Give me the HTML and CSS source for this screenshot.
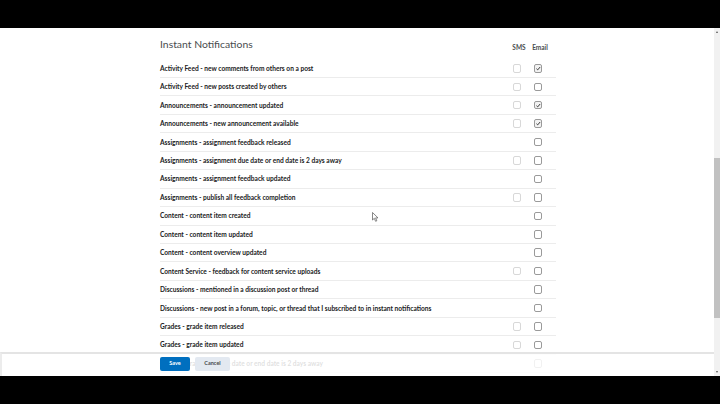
FILE: index.html
```html
<!DOCTYPE html>
<html lang="en">
<head>
<meta charset="utf-8">
<title>Instant Notifications</title>
<link rel="stylesheet" href="styles.css">
</head>
<body>
<div class="screen">
  <div class="bar"></div>
  <div class="view">
    <div class="pane">
      <div class="content">
        <div class="head">
          <h1 class="title">Instant Notifications</h1>
          <div class="colhead">SMS</div>
          <div class="colhead">Email</div>
        </div>
        <div class="row"><span class="label">Activity Feed - new comments from others on a post</span><span class="cell"><span class="cb sms"></span></span><span class="cell"><span class="cb email on"><svg viewBox="0 0 8 8"><path d="M1.8 4.3 L3.3 5.7 L6.3 2.2"/></svg></span></span></div>
        <div class="row"><span class="label">Activity Feed - new posts created by others</span><span class="cell"><span class="cb sms"></span></span><span class="cell"><span class="cb email"></span></span></div>
        <div class="row"><span class="label">Announcements - announcement updated</span><span class="cell"><span class="cb sms"></span></span><span class="cell"><span class="cb email on"><svg viewBox="0 0 8 8"><path d="M1.8 4.3 L3.3 5.7 L6.3 2.2"/></svg></span></span></div>
        <div class="row"><span class="label">Announcements - new announcement available</span><span class="cell"><span class="cb sms"></span></span><span class="cell"><span class="cb email on"><svg viewBox="0 0 8 8"><path d="M1.8 4.3 L3.3 5.7 L6.3 2.2"/></svg></span></span></div>
        <div class="row"><span class="label">Assignments - assignment feedback released</span><span class="cell"></span><span class="cell"><span class="cb email"></span></span></div>
        <div class="row"><span class="label">Assignments - assignment due date or end date is 2 days away</span><span class="cell"><span class="cb sms"></span></span><span class="cell"><span class="cb email"></span></span></div>
        <div class="row"><span class="label">Assignments - assignment feedback updated</span><span class="cell"></span><span class="cell"><span class="cb email"></span></span></div>
        <div class="row"><span class="label">Assignments - publish all feedback completion</span><span class="cell"><span class="cb sms"></span></span><span class="cell"><span class="cb email"></span></span></div>
        <div class="row"><span class="label">Content - content item created</span><span class="cell"></span><span class="cell"><span class="cb email"></span></span></div>
        <div class="row"><span class="label">Content - content item updated</span><span class="cell"></span><span class="cell"><span class="cb email"></span></span></div>
        <div class="row"><span class="label">Content - content overview updated</span><span class="cell"></span><span class="cell"><span class="cb email"></span></span></div>
        <div class="row"><span class="label">Content Service - feedback for content service uploads</span><span class="cell"><span class="cb sms"></span></span><span class="cell"><span class="cb email"></span></span></div>
        <div class="row"><span class="label">Discussions - mentioned in a discussion post or thread</span><span class="cell"></span><span class="cell"><span class="cb email"></span></span></div>
        <div class="row"><span class="label">Discussions - new post in a forum, topic, or thread that I subscribed to in instant notifications</span><span class="cell"></span><span class="cell"><span class="cb email"></span></span></div>
        <div class="row"><span class="label">Grades - grade item released</span><span class="cell"><span class="cb sms"></span></span><span class="cell"><span class="cb email"></span></span></div>
        <div class="row"><span class="label">Grades - grade item updated</span><span class="cell"><span class="cb sms"></span></span><span class="cell"><span class="cb email"></span></span></div>
        <div class="row"><span class="label">Grades - grade item due date or end date is 2 days away</span><span class="cell"></span><span class="cell"><span class="cb email"></span></span></div>
      </div>
      <div class="footer">
        <button class="btn primary">Save</button>
        <button class="btn secondary">Cancel</button>
      </div>
      <svg class="cursor" viewBox="0 0 7 10"><path d="M0.5 0.5 L0.5 8 L2.3 6.3 L3.6 9.3 L4.8 8.8 L3.6 5.9 L6 5.9 Z"/></svg>
    </div>
    <div class="scroll">
      <div class="arr up"></div>
      <div class="thumb"></div>
      <div class="track-fill"></div>
      <div class="arr down"></div>
    </div>
  </div>
  <div class="bar"></div>
</div>
</body>
</html>
```

FILE: styles.css
```css
* { box-sizing: border-box; }
html, body { margin: 0; padding: 0; background: #000; }
body { font-family: Lato, "Open Sans", "Liberation Sans", sans-serif; }

.screen { width: 720px; height: 404px; display: flex; flex-direction: column; }
.bar { height: 28px; background: #000; flex: none; }
.view { height: 348px; display: flex; background: #fff; flex: none; }
.pane { flex: 1; position: relative; overflow: hidden; background: #fff; }

.content { margin-left: 160px; width: 396px; }

.head {
  display: grid;
  grid-template-columns: 1fr 20px 20px;
  column-gap: 1px;
  padding-right: 8px;
  height: 31.6px;
  padding-top: 9.5px;
  align-items: start;
}
.title {
  margin: 0;
  font-size: 10.4px;
  line-height: 13px;
  font-weight: 400;
  color: #494c4e;
}
.colhead {
  margin-top: 5px;
  line-height: 9px;
  font-size: 6.5px;
  font-weight: 700;
  color: #494c4e;
  text-align: center;
  position: relative;
  left: 2px;
  white-space: nowrap;
}

.row {
  display: grid;
  grid-template-columns: 1fr 20px 20px;
  column-gap: 1px;
  padding-right: 8px;
  height: 18.45px;
  align-items: center;
  border-bottom: 1px solid #ececec;
}
.label {
  font-size: 6.6px;
  font-weight: 700;
  color: #202122;
  white-space: nowrap;
  line-height: 9px;
}
.cell { display: flex; justify-content: center; align-items: center; height: 100%; }
.cb {
  width: 8.5px; height: 8.5px;
  border-radius: 2px;
  border: 1px solid #9a9a9a;
  background: #fff;
  display: flex; align-items: center; justify-content: center;
}
.cb.sms { border-color: #d8d8d8; }
.cb.on { background: #f2f2f2; }
.cb svg { width: 7px; height: 7px; fill: none; stroke: #222; stroke-width: 1.1; }

.footer {
  position: absolute;
  left: 0; right: 0; bottom: 0;
  height: 24px;
  background: rgba(255,255,255,0.86);
  border-top: 2px solid #e4e4e4;
  border-left: 2px solid #ececec;
  display: flex;
  align-items: center;
  gap: 5px;
  padding-left: 158px;
  padding-bottom: 2px;
}
.btn {
  font-family: Lato, "Open Sans", "Liberation Sans", sans-serif;
  font-size: 5.5px;
  font-weight: 700;
  height: 13.5px;
  border: none;
  border-radius: 2px;
  padding: 0;
  line-height: 13.5px;
}
.primary { width: 30px; background: #006fbf; color: #fff; }
.secondary { width: 35px; background: #e3e9f1; color: #494c4e; }

.cursor {
  position: absolute;
  left: 372px; top: 184px;
  width: 7px; height: 10px;
  fill: #fff; stroke: #555; stroke-width: 0.7;
}

.scroll {
  width: 6px; flex: none;
  background: #f1f1f1;
  display: flex; flex-direction: column;
  align-items: center;
}
.arr { width: 0; height: 0; border-left: 1.5px solid transparent; border-right: 1.5px solid transparent; margin: 3px 0; }
.arr.up { border-bottom: 2px solid #555; }
.arr.down { border-top: 2px solid #555; margin-top: auto; }
.thumb { width: 100%; height: 160px; background: #c1c1c1; margin-top: 122px; }
.track-fill { flex: 1; }
```
